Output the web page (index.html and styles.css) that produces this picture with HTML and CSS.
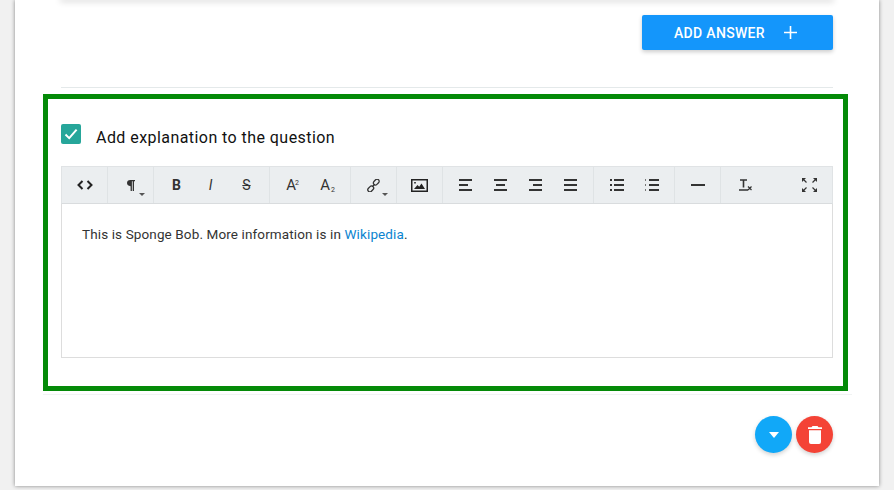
FILE: index.html
```html
<!DOCTYPE html>
<html lang="en">
<head>
<meta charset="utf-8">
<title>Question editor</title>
<link rel="stylesheet" href="styles.css">
</head>
<body>
<main class="card">
  <div class="answers-card"></div>
  <div class="answer-actions">
    <button class="add-answer" type="button">ADD ANSWER
      <svg class="plus" width="13" height="13" viewBox="0 0 13 13"><path d="M6.500 0v13M0 6.500h13" stroke="#fff" stroke-width="1.600" fill="none"/></svg>
    </button>
  </div>
  <hr class="divider">
  <section class="explanation">
    <label class="check-row">
      <span class="checkbox"><svg width="14" height="12" viewBox="0 0 14 12"><path d="M1.500 6.500l3.700 3.600L12.600 1.600" stroke="#fff" stroke-width="2" fill="none"/></svg></span>
      <span class="check-label">Add explanation to the question</span>
    </label>
    <div class="editor">
      <div class="toolbar">
        <div class="group">
          <span class="tool"><svg width="16" height="10" viewBox="0 0 16 10"><path d="M5.500 1L1.500 5l4 4M10.500 1l4 4-4 4" stroke="#222" stroke-width="2" fill="none"/></svg></span>
        </div>
        <div class="group">
          <span class="tool caret"><svg width="8" height="11" viewBox="0 0 8 11"><path d="M3.200 0H8v1.300H7V11H5.700V1.300H4.900V11H3.600V6.200C1.400 6.200 0 4.900 0 3.100S1.300 0 3.200 0z" fill="#333"/></svg></span>
        </div>
        <div class="group">
          <span class="tool text-tool bold">B</span>
          <span class="tool text-tool italic">I</span>
          <span class="tool text-tool strike">S</span>
        </div>
        <div class="group">
          <span class="tool text-tool letter">A<sup>2</sup></span>
          <span class="tool text-tool letter">A<sub>2</sub></span>
        </div>
        <div class="group">
          <span class="tool caret"><svg width="13" height="13" viewBox="0 0 13 13"><g fill="none" stroke="#333" stroke-width="1.300"><rect x="6" y="1" width="6.500" height="4.200" rx="2.100" transform="rotate(-45 9.250 3.100)"/><rect x="0.500" y="7.800" width="6.500" height="4.200" rx="2.100" transform="rotate(-45 3.750 9.900)"/><path d="M5.200 7.800l2.600-2.600"/></g></svg></span>
        </div>
        <div class="group">
          <span class="tool"><svg width="17" height="13" viewBox="0 0 17 13"><path d="M0 0h17v13H0z M1.500 1.500v10h14v-10z" fill="#222" fill-rule="evenodd"/><path d="M3 10l3.500-4 1.700 1.700L10.500 4.500 14 10z M3.200 3h1.600v1.600H3.200z" fill="#222"/></svg></span>
        </div>
        <div class="group">
          <span class="tool"><svg width="13" height="12" viewBox="0 0 13 12"><path d="M0 1h13M0 6h9M0 11h13" stroke="#333" stroke-width="2"/></svg></span>
          <span class="tool"><svg width="13" height="12" viewBox="0 0 13 12"><path d="M0 1h13M2 6h9M0 11h13" stroke="#333" stroke-width="2"/></svg></span>
          <span class="tool"><svg width="13" height="12" viewBox="0 0 13 12"><path d="M0 1h13M4 6h9M0 11h13" stroke="#333" stroke-width="2"/></svg></span>
          <span class="tool"><svg width="13" height="12" viewBox="0 0 13 12"><path d="M0 1h13M0 6h13M0 11h13" stroke="#333" stroke-width="2"/></svg></span>
        </div>
        <div class="group">
          <span class="tool"><svg width="14" height="12" viewBox="0 0 14 12"><path d="M0 1h2M0 6h2M0 11h2M4 1h10M4 6h10M4 11h10" stroke="#333" stroke-width="2"/></svg></span>
          <span class="tool"><svg width="14" height="12" viewBox="0 0 14 12"><path d="M4 1h10M4 6h10M4 11h10" stroke="#333" stroke-width="2"/><path d="M0.500 0v2M0.500 5v2M0.500 10v2" stroke="#777" stroke-width="1"/></svg></span>
        </div>
        <div class="group">
          <span class="tool"><svg width="14" height="2" viewBox="0 0 14 2"><path d="M0 1h14" stroke="#333" stroke-width="2"/></svg></span>
        </div>
        <div class="group last">
          <span class="tool clear"><svg width="13" height="12" viewBox="0 0 13 12"><path d="M1 1h7M4.500 1v7.500M0 11h9" stroke="#333" stroke-width="1.600" fill="none"/><path d="M9 7.500l3.500 3.500M12.500 7.500L9 11" stroke="#333" stroke-width="1.200"/></svg></span>
          <span class="tool"><svg width="15" height="14" viewBox="0 0 15 14"><path d="M0 0h4L0 4zM15 0v4l-4-4zM0 14v-4l4 4zM15 14h-4l4-4z" fill="#333"/><path d="M1.500 1.500l3 3M13.500 1.500l-3 3M1.500 12.500l3-3M13.500 12.500l-3-3" stroke="#333" stroke-width="1.200"/></svg></span>
        </div>
      </div>
      <div class="editor-body">This is Sponge Bob. More information is in <a href="#">Wikipedia</a>.</div>
    </div>
  </section>
  <hr class="section-line">
  <div class="fabs">
    <button class="fab blue" type="button"><svg width="10" height="6" viewBox="0 0 10 6"><path d="M0 0h10L5 6z" fill="#fff"/></svg></button>
    <button class="fab red" type="button"><svg width="14" height="18" viewBox="0 0 14 18"><path d="M4.500 0h5l1 1.200H14V3H0V1.200h3.500zM1 4.200h12V16a2 2 0 0 1-2 2H3a2 2 0 0 1-2-2z" fill="#fff"/></svg></button>
  </div>
</main>
</body>
</html>
```
FILE: styles.css
```css
* { box-sizing: border-box; }
html, body { margin: 0; height: 490px; overflow: hidden; }
body { background: #f1f1f1; font-family: Roboto, "Liberation Sans", sans-serif; }
.card {
  width: 864px; height: 486px; margin-left: 15px; padding-left: 46px; padding-right: 46px;
  background: #fff; box-shadow: 0 0 4px rgba(0,0,0,.45);
  display: flex; flex-direction: column; align-items: stretch;
}
.answers-card { height: 0; box-shadow: 0 0 6px 1px rgba(0,0,0,.3); flex: none; }
.answer-actions { display: flex; justify-content: flex-end; padding-top: 15px; }
.add-answer {
  width: 191px; height: 35px; border: 0; border-radius: 2px; background: #1496fb; color: #fff;
  font: 500 14px Roboto, sans-serif; letter-spacing: .32px; padding: 0 4px 0 0;
  display: flex; align-items: center; justify-content: center; gap: 19px;
  box-shadow: 0 2px 4px rgba(0,0,0,.2);
}
.divider { height: 1px; border: 0; background: #e4e9ea; margin: 37px 0 6px; flex: none; }
.explanation { margin: 0 -15px 0 -18px; height: 297px; border: 5px solid #048a08; padding: 25px 10px 0 13px; flex: none; }
.section-line { height: 1px; border: 0; background: #f1f3f3; margin: 3px -19px 0 -18px; flex: none; }
.check-row { display: flex; align-items: center; gap: 15px; height: 20px; }
.checkbox { width: 20px; height: 20px; border-radius: 2px; background: #26a69a; display: flex; align-items: center; justify-content: center; }
.check-label { font-size: 16px; letter-spacing: .44px; color: #111; padding-top: 6px; }
.editor { margin-top: 22px; border: 1px solid #ddd; height: 192px; display: flex; flex-direction: column; }
.toolbar { height: 38px; margin: -1px -1px 0; background: #ebeef0; border: 1px solid #e0e3e5; border-bottom-color: #d9dcde; display: flex; flex: none; }
.group { display: flex; align-items: center; padding: 0 5px; border-right: 1px solid #dfe3e5; }
.group.last { border-right: 0; flex: 1; justify-content: space-between; padding-right: 5px; }
.tool { width: 35px; height: 100%; display: flex; align-items: center; justify-content: center; position: relative; color: #333; }
.tool.clear { margin-left: 2px; }
.caret::after { content: ""; position: absolute; right: 3px; bottom: 7px; border: 3px solid transparent; border-top-color: #555; border-bottom: 0; }
.text-tool { display: block; text-align: center; line-height: 36px; font: 400 14px/36px Roboto, sans-serif; }
.bold { font-weight: 700; }
.italic { font-style: italic; font-weight: 400; padding-right: 2px; }
.strike { text-decoration: line-through; }
.letter { font-size: 15px; }
.letter sup, .letter sub { font-size: 7px; line-height: 0; }
.letter sup { margin-left: -1px; vertical-align: 5px; }
.letter sub { margin-left: 1px; vertical-align: -2px; }
.editor-body { padding: 21px 20px; font-size: 13.5px; line-height: 18px; color: #333; letter-spacing: .12px; }
.editor-body a { color: #0b84d0; text-decoration: none; }
.fabs { display: flex; justify-content: flex-end; gap: 4px; margin-top: 21px; }
.fab { width: 37px; height: 37px; border: 0; padding: 0; border-radius: 50%; display: flex; align-items: center; justify-content: center; box-shadow: 0 2px 4px rgba(0,0,0,.18); }
.blue { background: #11a8f8; }
.red { background: #f44336; }
```
